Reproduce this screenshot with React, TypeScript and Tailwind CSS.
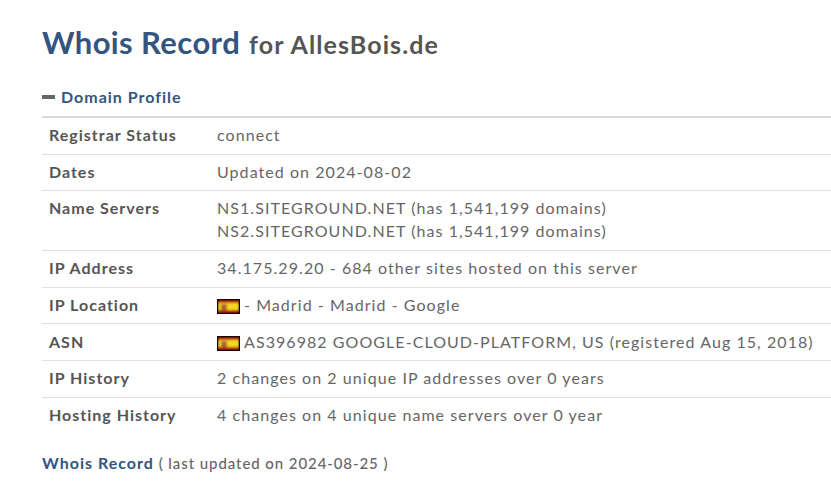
const labelClass = 'w-[175px] shrink-0 pl-[7px] font-bold tracking-[1px] text-[#555]';

const Flag = () => (
  <svg className="mr-[4px] inline-block align-[-3px]" width="23" height="15" viewBox="0 0 23 15">
    <defs>
      <filter id="soft" x="0" y="0" width="100%" height="100%">
        <feGaussianBlur stdDeviation="0.8" />
      </filter>
    </defs>
    <rect width="23" height="15" fill="#1a0300" />
    <g filter="url(#soft)">
      <rect x="1" y="1" width="21" height="13" fill="#f2d820" />
      <rect x="1" y="1" width="21" height="3" fill="#b02408" />
      <rect x="1" y="11" width="21" height="3" fill="#b02408" />
      <rect x="4" y="5" width="6" height="6" rx="1" fill="#b06438" />
    </g>
  </svg>
);

const rows = [
  { label: 'Registrar Status', value: <>connect</> },
  { label: 'Dates', value: <>Updated on 2024-08-02</> },
  {
    label: 'Name Servers',
    value: (
      <>
        <div>NS1.SITEGROUND.NET (has 1,541,199 domains)</div>
        <div>NS2.SITEGROUND.NET (has 1,541,199 domains)</div>
      </>
    ),
  },
  { label: 'IP Address', value: <>34.175.29.20 - 684 other sites hosted on this server</> },
  { label: 'IP Location', value: <><Flag />- Madrid - Madrid - Google</> },
  { label: 'ASN', value: <><Flag />AS396982 GOOGLE-CLOUD-PLATFORM, US (registered Aug 15, 2018)</> },
  { label: 'IP History', value: <>2 changes on 2 unique IP addresses over 0 years</> },
  { label: 'Hosting History', value: <>4 changes on 4 unique name servers over 0 year</> },
];

export default function App() {
  return (
    <div className="h-[482px] w-[831px] overflow-hidden bg-white pl-[42px] font-['Lato',sans-serif] text-[16px] leading-[23px] tracking-[1.06px] text-[#666]">
      <h1 className="pt-[22px] text-[31px] leading-[40px] font-bold tracking-[0.4px] text-[#33557f]">
        Whois Record <span className="ml-[1px] text-[25px] tracking-[1.1px] text-[#555]">for AllesBois.de</span>
      </h1>
      <div className="mt-[21px] flex items-center font-bold tracking-[1px] text-[#33557f]">
        <span className="mr-[6px] h-[4px] w-[13px] bg-[#666]" />
        Domain Profile
      </div>
      <div className="mt-[8px] border-t-2 border-[#d9d9d9]">
        {rows.map((row) => (
          <div key={row.label} className="flex border-b border-[#e0e0e0] pt-[5.1px] pb-[7.6px] last:border-b-0">
            <div className={labelClass}>{row.label}</div>
            <div className="whitespace-nowrap">{row.value}</div>
          </div>
        ))}
      </div>
      <div className="mt-[17px] font-bold tracking-[1px] text-[#33557f]">
        Whois Record <span className="text-[15px] font-medium tracking-[0.92px] text-[#666]">( last updated on 2024-08-25 )</span>
      </div>
    </div>
  );
}
